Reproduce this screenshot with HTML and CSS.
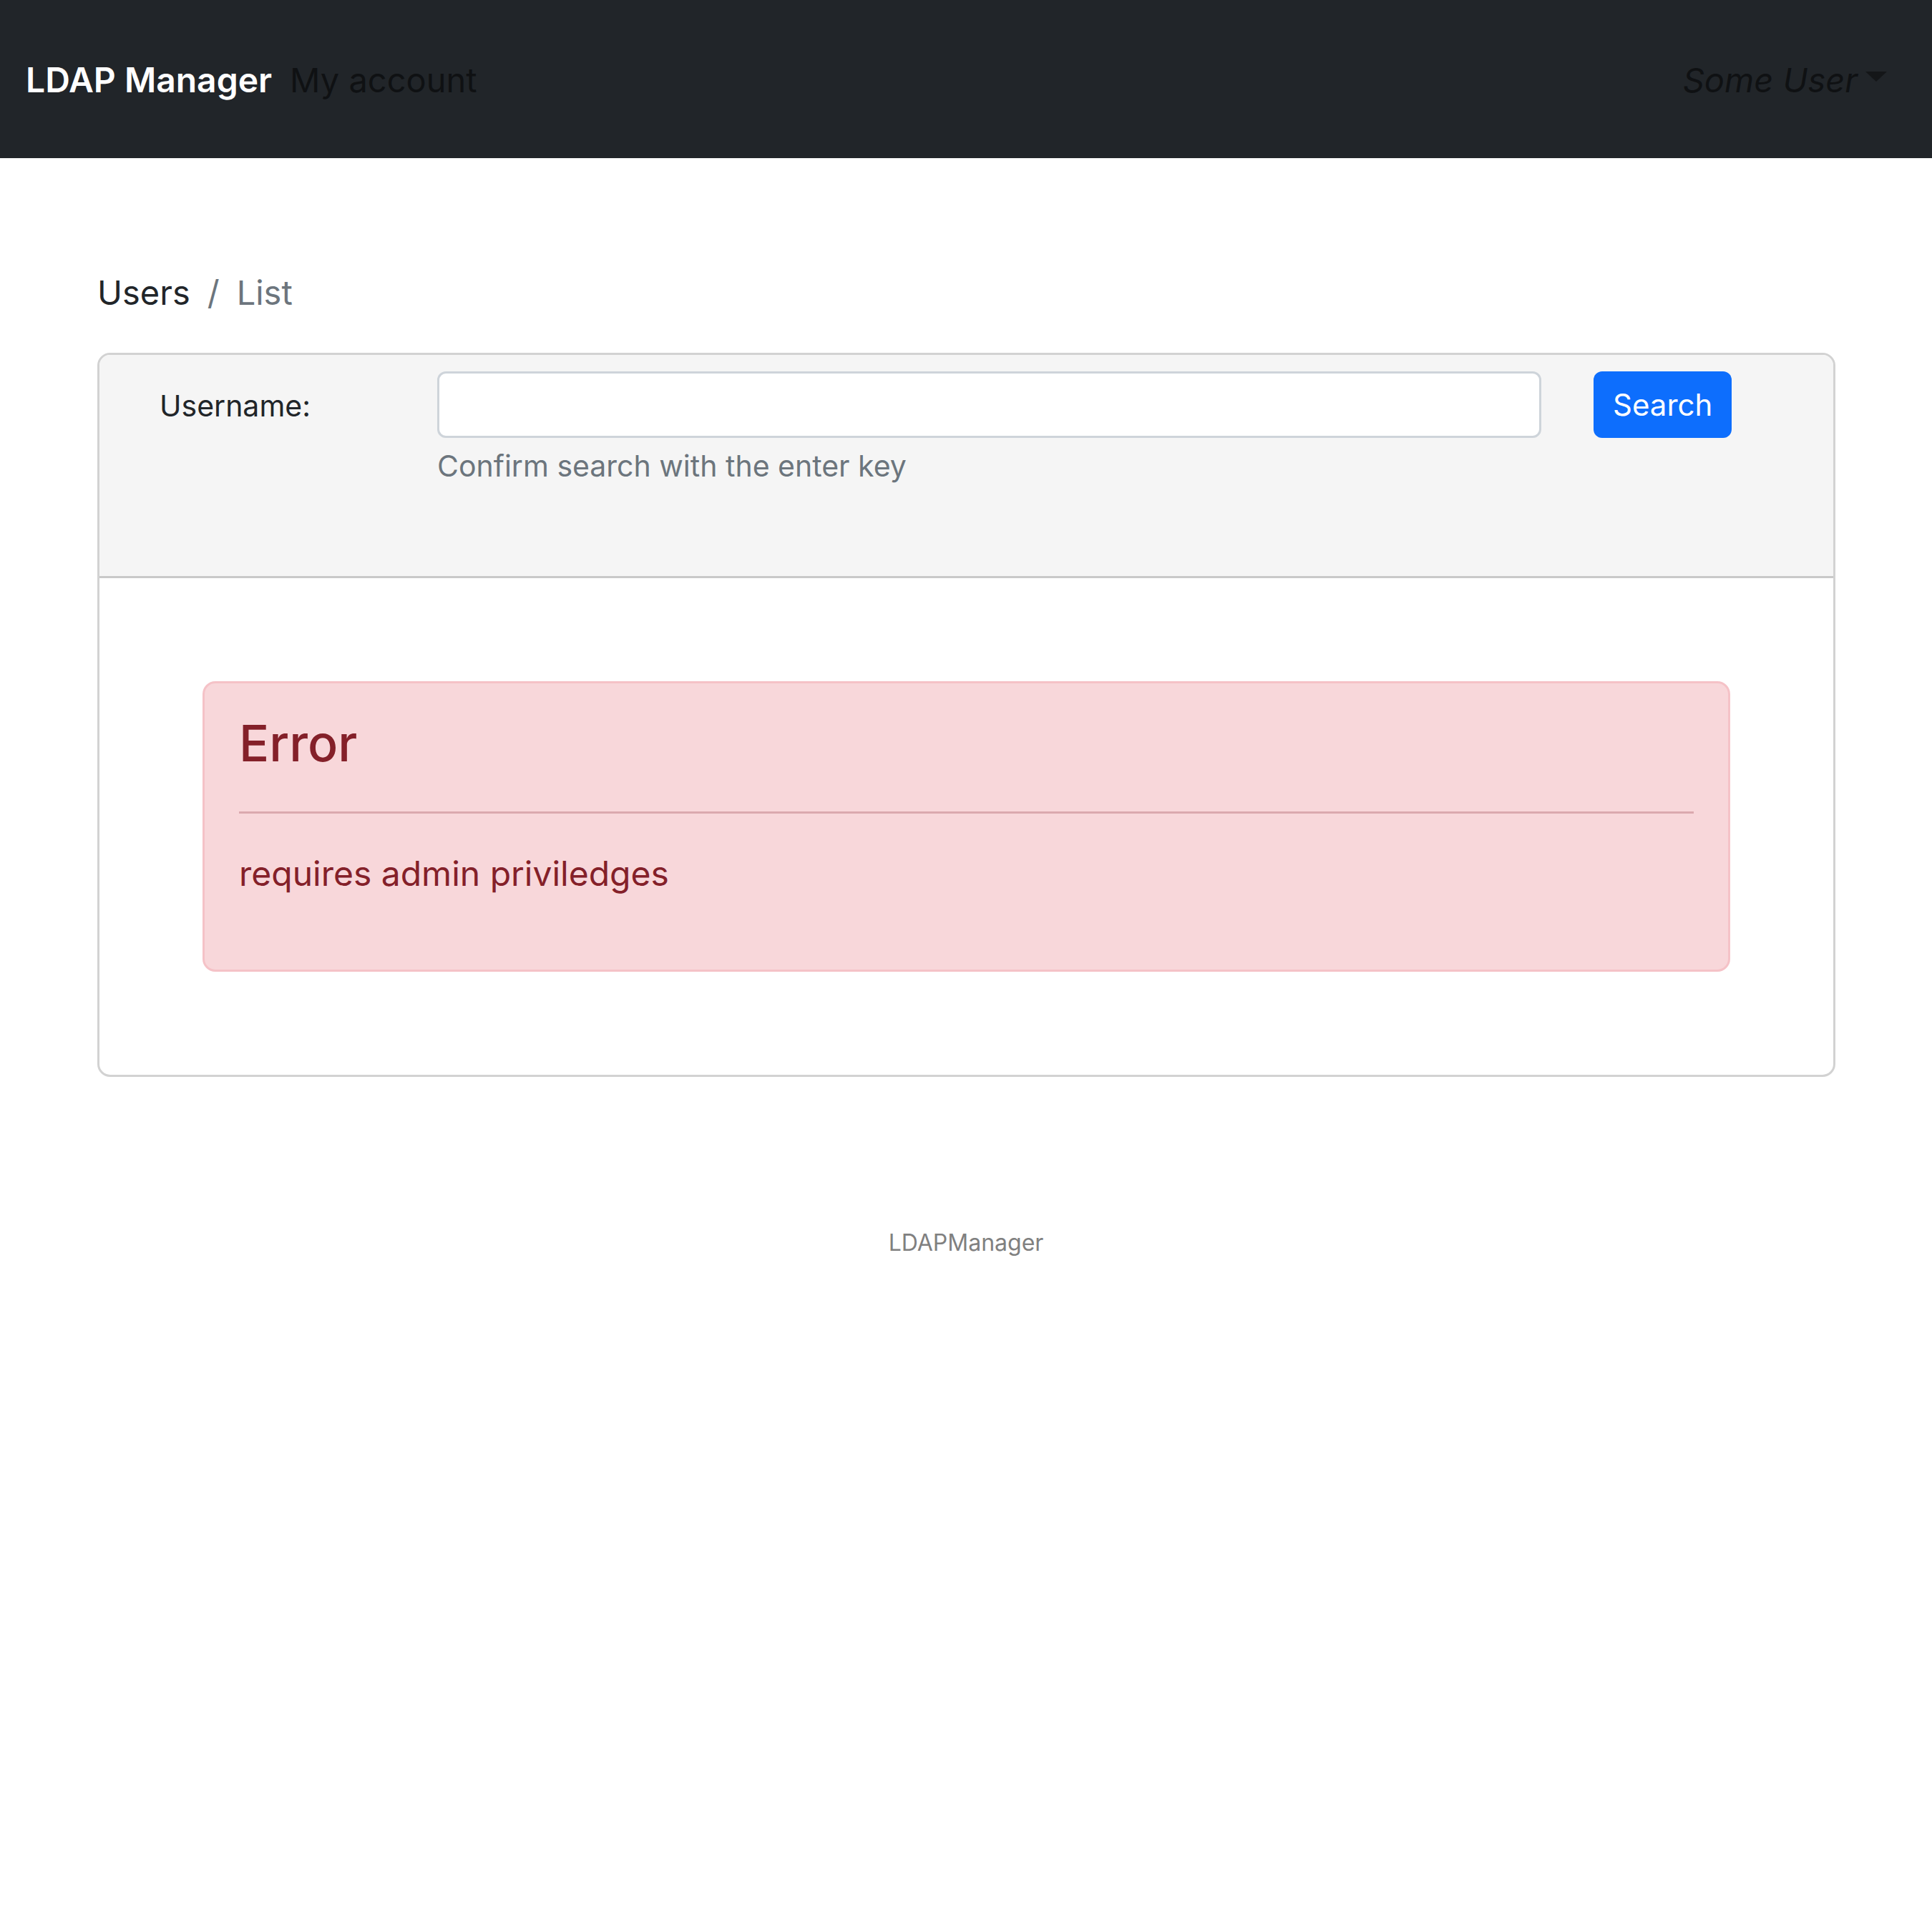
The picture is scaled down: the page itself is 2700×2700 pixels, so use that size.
FILE: index.html
```html
<!DOCTYPE html>
<html lang="en">
<head>
<meta charset="utf-8">
<title>LDAP Manager - Users</title>
<link rel="stylesheet" href="styles.css">
</head>
<body>
<nav class="navbar">
  <a class="brand" href="#">LDAP Manager</a>
  <a class="nav-link" href="#">My account</a>
  <div class="spacer"></div>
  <a class="user-menu" href="#">Some User<span class="caret"></span></a>
</nav>
<main class="main">
  <ol class="breadcrumb">
    <li class="crumb">Users</li>
    <li class="crumb crumb-active">List</li>
  </ol>
  <div class="card">
    <div class="card-header">
      <form class="search-row">
        <label class="search-label" for="username">Username:</label>
        <div class="search-field">
          <input class="search-input" id="username" type="text">
          <div class="search-hint">Confirm search with the enter key</div>
        </div>
        <button class="search-btn" type="button">Search</button>
      </form>
    </div>
    <div class="card-body">
      <div class="alert">
        <h4 class="alert-heading">Error</h4>
        <hr class="alert-rule">
        <p class="alert-text">requires admin priviledges</p>
      </div>
    </div>
  </div>
</main>
<footer class="footer">LDAPManager</footer>
</body>
</html>
```
FILE: styles.css
```css
* { box-sizing: border-box; }
html, body { margin: 0; padding: 0; background: #fff; }
body {
  font-family: Inter, "Noto Sans", "Liberation Sans", sans-serif;
  color: #212529;
  font-size: 48px;
  line-height: 1.5;
}
a { text-decoration: none; }

.navbar {
  height: 221px;
  background: #212529;
  display: flex;
  align-items: center;
  padding: 2px 63px 0 36px;
}
.brand {
  color: #fff;
  font-size: 48px;
  font-weight: 600;
  line-height: 72px;
}
.nav-link {
  margin-left: 25px;
  color: rgba(0, 0, 0, 0.55);
  font-size: 47px;
  line-height: 72px;
}
.spacer { flex: 1; }
.user-menu {
  color: rgba(0, 0, 0, 0.55);
  font-style: italic;
  font-size: 47px;
  line-height: 72px;
  display: flex;
  align-items: center;
}
.caret {
  display: inline-block;
  margin-left: 11px;
  margin-top: -10px;
  width: 0;
  height: 0;
  border-top: 14px solid #141618;
  border-left: 15px solid transparent;
  border-right: 15px solid transparent;
}

.main {
  padding: 152px 135px 0 136px;
}
.breadcrumb {
  list-style: none;
  margin: 0 0 48px;
  padding: 0;
  display: flex;
  font-size: 47px;
  line-height: 72px;
}
.crumb-active { color: #6c757d; }
.crumb + .crumb { padding-left: 24px; }
.crumb + .crumb::before {
  content: "/";
  color: #6c757d;
  padding-right: 24px;
}

.card {
  border: 3px solid #d2d2d2;
  border-radius: 18px;
  overflow: hidden;
}
.card-header {
  background: #f5f5f5;
  border-bottom: 3px solid #c9c9c9;
  padding: 23px 48px 122px 84px;
}
.search-row {
  display: flex;
  align-items: flex-start;
  margin: 0;
}
.search-label {
  width: 388px;
  flex: none;
  font-size: 41px;
  line-height: 63px;
  padding: 17px 0 13px;
  color: #212529;
}
.search-field {
  width: 1543px;
  flex: none;
}
.search-input {
  display: block;
  width: 100%;
  height: 93px;
  border: 3px solid #ced4da;
  border-radius: 12px;
  background: #fff;
  font-family: inherit;
  font-size: 42px;
  padding: 0 24px;
  margin: 0;
  outline: none;
}
.search-hint {
  margin-top: 8px;
  font-size: 41px;
  line-height: 63px;
  color: #6c757d;
}
.search-btn {
  margin-left: 73px;
  height: 93px;
  padding: 0 27px;
  border: none;
  border-radius: 12px;
  background: #0d6efd;
  color: #fff;
  font-family: inherit;
  font-size: 42px;
  line-height: 63px;
  cursor: pointer;
}

.card-body {
  padding: 144px;
}
.alert {
  background: #f8d7da;
  border: 3px solid #f5c2c7;
  border-radius: 18px;
  color: #842029;
  padding: 48px;
}
.alert-heading {
  margin: 0;
  font-size: 70px;
  font-weight: 500;
  line-height: 72px;
}
.alert-rule {
  margin: 59px 0 48px;
  border: 0;
  border-top: 3px solid #dba9ae;
  height: 0;
}
.alert-text {
  margin: 0 0 50px;
  font-size: 48px;
  line-height: 72px;
}

.footer {
  margin-top: 205px;
  text-align: center;
  font-size: 32px;
  line-height: 54px;
  color: #808080;
}
```
